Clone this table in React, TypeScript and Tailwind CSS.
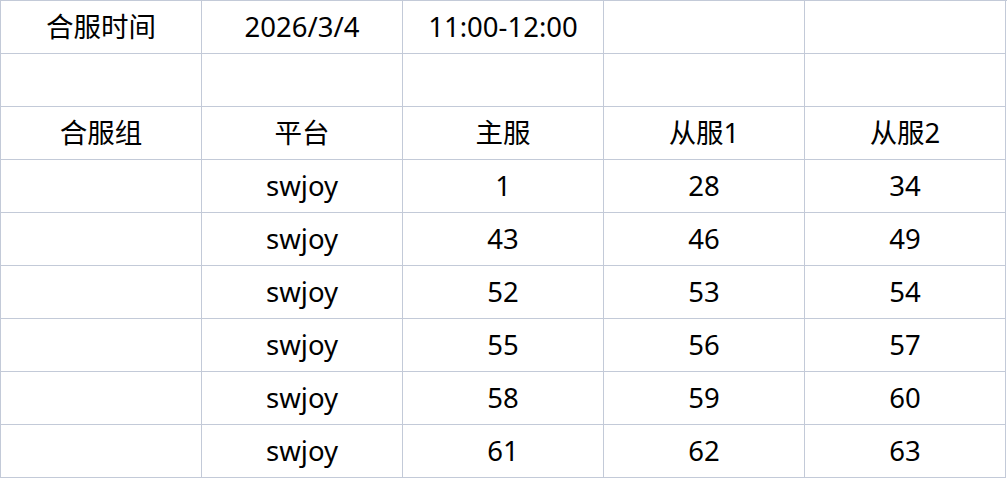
const rows: string[][] = [
  ['合服时间', '2026/3/4', '11:00-12:00', '', ''],
  ['', '', '', '', ''],
  ['合服组', '平台', '主服', '从服1', '从服2'],
  ['', 'swjoy', '1', '28', '34'],
  ['', 'swjoy', '43', '46', '49'],
  ['', 'swjoy', '52', '53', '54'],
  ['', 'swjoy', '55', '56', '57'],
  ['', 'swjoy', '58', '59', '60'],
  ['', 'swjoy', '61', '62', '63'],
];

export default function App() {
  return (
    <div className="min-h-screen bg-white">
      <div
        className="grid grid-cols-[repeat(5,201px)] border-l border-t border-[#c3cad8] text-black text-[27.5px]"
        style={{ fontFamily: '"Noto Sans", "Noto Sans CJK SC", sans-serif' }}
      >
        {rows.map((row, r) =>
          row.map((cell, c) => (
            <div
              key={`${r}-${c}`}
              className="h-[53px] flex items-center justify-center border-r border-b border-[#c3cad8] leading-none"
            >
              {cell}
            </div>
          ))
        )}
      </div>
    </div>
  );
}
